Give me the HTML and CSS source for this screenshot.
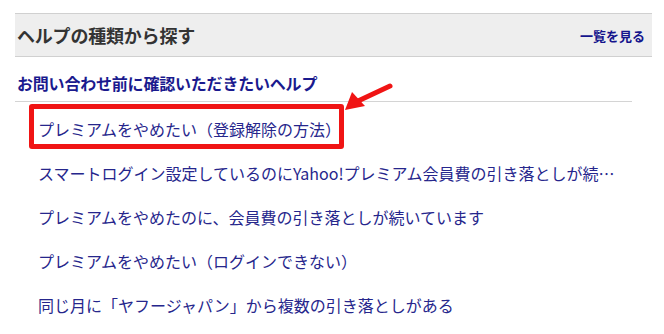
FILE: index.html
```html
<!DOCTYPE html>
<html lang="ja">
<head>
    <meta charset="UTF-8">
    <title>ヘルプの種類から探す</title>
    <link rel="stylesheet" href="styles.css">
</head>
<body>
    <div class="help-container">
        <div class="help-header">
            <h2>ヘルプの種類から探す</h2>
            <a class="more-link" href="#">一覧を見る</a>
        </div>

        <div class="help-section">
            <h3>お問い合わせ前に確認いただきたいヘルプ</h3>
            <ul class="help-list">
                <li><a href="#">プレミアムをやめたい（登録解除の方法）</a></li>
                <li><a href="#">スマートログイン設定しているのにYahoo!プレミアム会員費の引き落としが続いています</a></li>
                <li><a href="#">プレミアムをやめたのに、会員費の引き落としが続いています</a></li>
                <li><a href="#">プレミアムをやめたい（ログインできない）</a></li>
                <li><a href="#">同じ月に「ヤフージャパン」から複数の引き落としがある</a></li>
            </ul>
        </div>

        <!-- 注釈：赤枠と矢印 -->
        <div class="mark-box"></div>
        <svg class="mark-arrow" width="60" height="40" viewBox="0 0 60 40">
            <line x1="54" y1="6" x2="22" y2="21" stroke="#f01414" stroke-width="5" stroke-linecap="round"/>
            <polygon points="9,30 16,12 29,26" fill="#f01414"/>
        </svg>
    </div>
</body>
</html>
```

FILE: styles.css
```css
body {
    margin: 0;
    background-color: #fff;
    font-family: "Noto Sans CJK JP", "Noto Sans", sans-serif;
}

.help-container {
    position: relative;
    padding: 13px 12px 0 15px;
}

.help-header {
    display: flex;
    justify-content: space-between;
    align-items: center;
    height: 42px;
    padding: 0 7px 0 2px;
    background-color: #eeeeee;
    border-top: 1px solid #d0d0d0;
    border-bottom: 1px solid #d0d0d0;
}

.help-header h2 {
    margin: 0;
    font-size: 18px;
    font-weight: bold;
    color: #333;
    letter-spacing: -0.2px;
}

.more-link {
    font-size: 13px;
    font-weight: bold;
    color: #14148c;
    text-decoration: none;
}

.help-section {
    margin-right: 20px;
}

.help-section h3 {
    margin: 0;
    padding: 0 0 0 2px;
    height: 44px;
    line-height: 53px;
    font-size: 16px;
    font-weight: bold;
    color: #1a1a8e;
    border-bottom: 1px solid #d4d4d4;
    letter-spacing: -0.2px;
}

.help-list {
    list-style: none;
    margin: 0;
    padding: 5px 0 0 23px;
}

.help-list li {
    height: 44px;
    line-height: 44px;
    margin-right: 10px;
    font-size: 16px;
    white-space: nowrap;
    overflow: hidden;
    text-overflow: ellipsis;
    color: #26268c;
}

.help-list a {
    color: #26268c;
    text-decoration: none;
}

.mark-box {
    position: absolute;
    left: 29px;
    top: 104px;
    width: 305px;
    height: 35px;
    border: 5px solid #f01414;
    border-radius: 3px;
}

.mark-arrow {
    position: absolute;
    left: 336px;
    top: 80px;
}
```
